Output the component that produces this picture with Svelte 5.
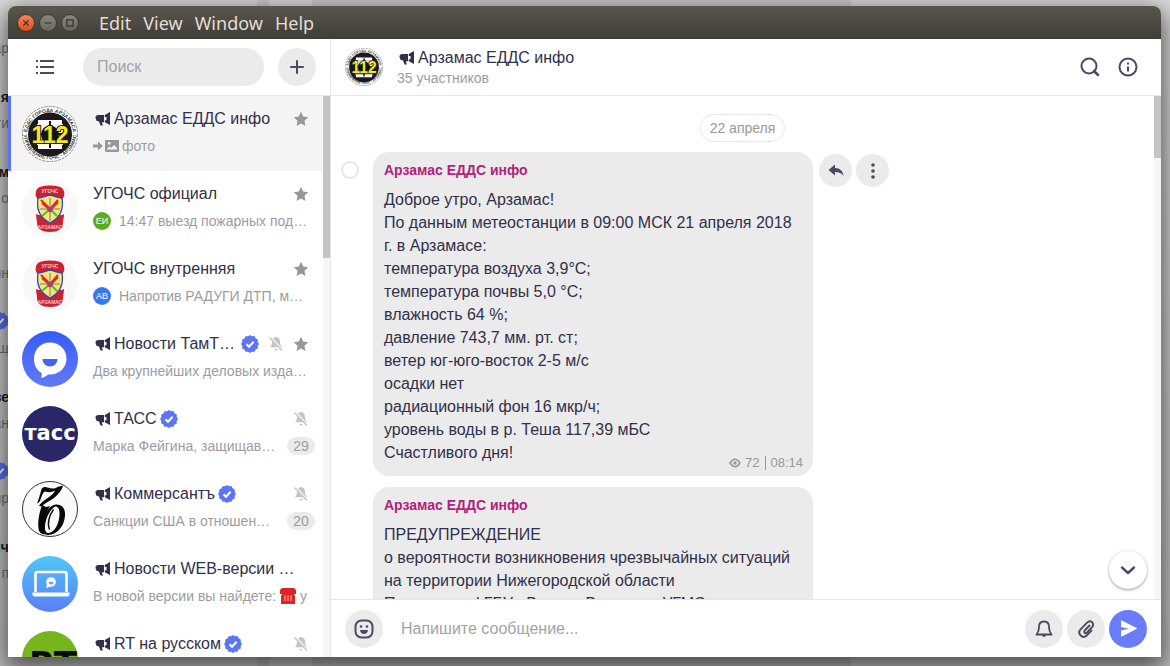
<script lang="ts">
  type Chat = {
    title: string;
    preview: string;
    avatar: string;
    channel?: boolean;
    verified?: boolean;
    muted?: boolean;
    starred?: boolean;
    photo?: boolean;
    author?: { initials: string; tone: string };
    unread?: number;
    phone?: boolean;
    active?: boolean;
  };
  type Message = { id: number; sender: string; lines: string[]; views: number; time: string };

  const menus = ["Edit", "View", "Window", "Help"];

  const chats: Chat[] = [
    { title: "Арзамас ЕДДС инфо", preview: "фото", avatar: "112", channel: true, starred: true, photo: true, active: true },
    { title: "УГОЧС официал", preview: "14:47 выезд пожарных под…", avatar: "crest", starred: true, author: { initials: "ЕИ", tone: "green" } },
    { title: "УГОЧС внутренняя", preview: "Напротив РАДУГИ ДТП, м…", avatar: "crest", starred: true, author: { initials: "АВ", tone: "blue" } },
    { title: "Новости ТамТ…", preview: "Два крупнейших деловых изда…", avatar: "tamtam", channel: true, verified: true, muted: true, starred: true },
    { title: "ТАСС", preview: "Марка Фейгина, защищав…", avatar: "tass", channel: true, verified: true, muted: true, unread: 29 },
    { title: "Коммерсантъ", preview: "Санкции США в отношен…", avatar: "kommersant", channel: true, verified: true, muted: true, unread: 20 },
    { title: "Новости WEB-версии …", preview: "В новой версии вы найдете:", avatar: "web", channel: true, phone: true },
    { title: "RT на русском", preview: "", avatar: "rt", channel: true, verified: true, muted: true },
  ];

  const messages: Message[] = [
    {
      id: 1,
      sender: "Арзамас ЕДДС инфо",
      lines: [
        "Доброе утро, Арзамас!",
        "По данным метеостанции в 09:00 МСК 21 апреля 2018",
        "г. в Арзамасе:",
        "температура воздуха 3,9°С;",
        "температура почвы 5,0 °С;",
        "влажность 64 %;",
        "давление 743,7 мм. рт. ст;",
        "ветер юг-юго-восток 2-5 м/с",
        "осадки нет",
        "радиационный фон 16 мкр/ч;",
        "уровень воды в р. Теша 117,39 мБС",
        "Счастливого дня!",
      ],
      views: 72,
      time: "08:14",
    },
    {
      id: 2,
      sender: "Арзамас ЕДДС инфо",
      lines: [
        "ПРЕДУПРЕЖДЕНИЕ",
        "о вероятности возникновения чрезвычайных ситуаций",
        "на территории Нижегородской области",
        "По данным ФГБУ «Верхне-Волжское УГМС»",
      ],
      views: 70,
      time: "08:15",
    },
  ];

  let search = $state("");
  let draft = $state("");
</script>

{#snippet megaphone()}
  <svg class="megaphone" viewBox="0 0 16 16" aria-hidden="true">
    <path d="M9.800 4 15 1v13l-5.200-2.800v-2h1.700V6H9.800z" />
    <path d="M9 4v7.200H7.200l-.2 1 1 2.300H5.500L4 10.500 1.500 9.800.5 7 .8 5l2-1z" />
  </svg>
{/snippet}

{#snippet star()}
  <svg class="star" viewBox="0 0 16 16" aria-hidden="true">
    <path d="M8 .8l2.200 4.700 5 .7-3.700 3.600.9 5.200L8 12.500 3.600 15l.9-5.200L.8 6.200l5-.7z" />
  </svg>
{/snippet}

{#snippet verified()}
  <svg class="verified" viewBox="0 0 18 18" aria-hidden="true">
    <path d="M9 0l2 1.300 2.500-.2 1.100 2.200 2.200 1.100-.1 2.500L18 9l-1.300 2 .1 2.500-2.200 1.100-1.100 2.200-2.500-.1L9 18l-2-1.300-2.500.1-1.100-2.200-2.200-1.100.1-2.500L0 9l1.300-2-.1-2.500 2.200-1.100 1.100-2.200 2.500.1z" fill="#5c74f6" />
    <path d="M5.500 9.200l2.500 2.500 4.600-5" fill="none" stroke="#fff" stroke-width="2" />
  </svg>
{/snippet}

{#snippet muted()}
  <svg class="muted" viewBox="0 0 16 16" aria-hidden="true">
    <path d="M8 1c2.600.4 4 2.400 4 4.600 0 3.400.8 4.400 2 5.700H2c1.200-1.300 2-2.300 2-5.700C4 3.400 5.400 1.400 8 1zM6.500 13h3c0 2-3 2-3 0z" fill="#c4c4c6" />
    <path d="M2.500 1.500l12 13" stroke="#fff" stroke-width="2.400" />
    <path d="M1.500 1.500l12.500 13" stroke="#c4c4c6" stroke-width="1.400" />
  </svg>
{/snippet}

{#snippet avatar(kind: string)}
  <svg class="avatar" viewBox="0 0 56 56" aria-hidden="true">
    {#if kind === "112"}
      <defs>
        <path id="ring-top" d="M5 29a23 23 0 0 1 46 0" />
        <path id="ring-bottom" d="M1.500 27a26.500 26.500 0 0 0 53 0" />
      </defs>
      <circle cx="28" cy="28" r="27.500" fill="#fff" stroke="#8c8c8c" stroke-width="1" stroke-dasharray="3 1" />
      <text class="ring"><textPath href="#ring-top" startOffset="50%">ЕДДС ГОРОДА АРЗАМАСА</textPath></text>
      <text class="ring"><textPath href="#ring-bottom" startOffset="50%">УПРАВЛЕНИЕ ГОЧС - АРЗАМАС</textPath></text>
      <circle cx="28" cy="28.500" r="22" fill="#1b191d" />
      <path d="M16 14h24v4H16zM16 39h24v4H16z" fill="#fff" />
      <path d="M15 18h26v21H15z" fill="#f4f4f4" />
      <circle cx="28" cy="28.500" r="9" fill="#151318" />
      <path d="M28 15v27M16 28h24" stroke="#111" stroke-width="2" />
      <text class="number" x="28" y="37">112</text>
    {:else if kind === "crest"}
      <circle cx="28" cy="28" r="28" fill="#f8f8f8" />
      <path d="M16 7c4-3.500 20-3.500 24 0 3 3 3 8 1 10l-1 3H16l-1-3c-2-2-2-7 1-10z" fill="#c92333" />
      <path d="M14 33c4 2 4 0 6 2h16c2-2 3 0 6-2 0 4-1 6-1 9 0 6-5 9-13 9s-13-3-13-9c0-3-1-5-1-9z" fill="#c92333" />
      <path d="M16 17c4 0 7-2 12-3 5 1 8 3 12 3 2 12-2 20-12 25-10-5-14-13-12-25z" fill="#f4e774" stroke="#3945ba" stroke-width="1.300" />
      <path d="M19 19l9 9 8-9M20 22l8 7M36 21l-8 8" stroke="#df2630" stroke-width="2" fill="none" />
      <path d="M27 29l-7 6M29 29l6 6" stroke="#5eb53a" stroke-width="2" />
      <path d="M28 17v23M18 28h20" stroke="#707c91" stroke-width="1" />
      <circle cx="28" cy="28.500" r="2.700" fill="#d63240" />
      <circle cx="28" cy="28.500" r="1.300" fill="#4169c5" />
      <text class="crest-label" x="28" y="11.500">УГОЧС</text>
      <text class="crest-label" x="28" y="48">АРЗАМАС</text>
    {:else if kind === "tamtam"}
      <defs><linearGradient id="tamtam-fill" x2="0" y2="1"><stop stop-color="#365cf5" /><stop offset="1" stop-color="#627af8" /></linearGradient></defs>
      <circle cx="28" cy="28" r="28" fill="url(#tamtam-fill)" />
      <path d="M28 11.500c9.500 0 16.500 7 16.500 16S37.500 43.500 28 43.500h-2c-2 1.800-4 2.800-7 3.500.8-1.500.8-3.500.5-5C14.500 39 12 34 12 28c0-9.500 6.500-16.500 16-16.500z" fill="#fff" />
      <path d="M20.500 28h15c0 4.500-3.500 7.500-7.500 7.500S20.500 32.500 20.500 28z" fill="#4365f5" />
    {:else if kind === "tass"}
      <circle cx="28" cy="28" r="28" fill="#292766" />
      <text class="tass" x="28" y="34">тасс</text>
    {:else if kind === "kommersant"}
      <circle cx="28" cy="28" r="27.500" fill="#fafafa" stroke="#333" />
      <path d="M15 22.500c2-5 3-9 4.500-14.500 2-2.500 4-2 6-1.500 4 1.300 7 1.500 10-.5L41 4.500c-1 5-5 9-9 12.500-6 4-10 6-12.500 8.500l-2.500-.5c2-4 8-7 12-10.500 2-1.500 3-3 4-5-4 2.500-7 1.500-10 1-2 .5-3 4-4.500 8-.5 2-1.500 3-3.500 4z" fill="#090909" />
      <path d="M20 24c-3 9-5 18-3 26 2 3 4 3.500 7 3-3-4-3-10-1-16 1-4 3-9 5-12l-4 1z" fill="#090909" />
      <path fill-rule="evenodd" d="M34 23.500c6-.5 9.500 4 9 11-.6 10-7 19-17 19.500-4 0-6-3-6-8 .5-11 6-21.500 14-22.500zm-1 2c-5 3-9.500 12-10 20-.3 4 .8 6.500 3.500 6.500 6-.5 10.500-9 11-18 .3-5-1-9-4.500-8.500z" fill="#090909" />
      <path d="M31.500 28.500c-4.500 6-6.500 14-4 20" fill="none" stroke="#090909" stroke-width="1.400" />
    {:else if kind === "web"}
      <defs><linearGradient id="web-fill" x2="0" y2="1"><stop stop-color="#50c7f7" /><stop offset="1" stop-color="#5b7df7" /></linearGradient></defs>
      <circle cx="28" cy="28" r="28" fill="url(#web-fill)" />
      <path d="M13.500 36V18q0-2 2-2h27q2 0 2 2v18" fill="none" stroke="#fff" stroke-width="2.600" />
      <path d="M10.500 36.500h37v2q0 2-2 2h-33q-2 0-2-2z" fill="#fff" />
      <circle cx="29" cy="26" r="4.800" fill="#fff" />
      <path d="M25 28l-1 4 5-2z" fill="#fff" />
      <path d="M26.500 26h5q-.5 2.500-2.500 2.500T26.500 26z" fill="#56a2f7" />
    {:else}
      <circle cx="28" cy="28" r="28" fill="#76b51b" />
      <text class="rt" x="31" y="45">RT</text>
    {/if}
  </svg>
{/snippet}

<div class="desktop">
  <div class="backdrop" aria-hidden="true">
    <span class="peek p1">ар</span><span class="peek dark p2">я</span><span class="peek p3">ги</span>
    <span class="peek dark p4">м</span><span class="peek p5">о</span><span class="peek p6">ин</span>
    <span class="peek p7">{@render verified()}</span><span class="peek p8">ещ</span>
    <span class="peek dark p9">зе</span><span class="peek p10">ан</span>
    <span class="peek p11">{@render verified()}</span><span class="peek p12">пр</span>
    <span class="peek dark p13">ич</span><span class="peek p14">п</span>
  </div>

  <div class="window">
    <div class="titlebar">
      <button class="control close" aria-label="Close"><svg viewBox="0 0 18 18"><path d="M6 6l6 6M12 6l-6 6" /></svg></button>
      <button class="control" aria-label="Minimize"><svg viewBox="0 0 18 18"><path d="M5 9h8" /></svg></button>
      <button class="control" aria-label="Maximize"><svg viewBox="0 0 18 18"><path d="M5.500 5.500h7v7h-7z" /></svg></button>
      <nav class="menus">
        {#each menus as menu}<button>{menu}</button>{/each}
      </nav>
    </div>

    <div class="app">
      <aside class="sidebar">
        <header class="tools">
          <button class="plain" aria-label="Меню">
            <svg width="22" height="20" viewBox="0 0 22 20"><path d="M6 4h14M6 10h14M6 16h14M2 4h2M2 10h2M2 16h2" stroke-width="2" stroke-linecap="butt" /></svg>
          </button>
          <input class="search" type="search" aria-label="Поиск" placeholder="Поиск" bind:value={search} />
          <button class="round" aria-label="Создать"><svg width="20" height="20" viewBox="0 0 20 20"><path d="M10 4v12M4 10h12" stroke-width="2" /></svg></button>
        </header>
        <div class="scroller">
          <ul class="chats">
            {#each chats as chat}
              <li class="chat" class:active={chat.active}>
                {@render avatar(chat.avatar)}
                <div class="info">
                  <div class="row">
                    <span class="name">
                      {#if chat.channel}{@render megaphone()}{/if}
                      <span>{chat.title}</span>
                      {#if chat.verified && !chat.starred}{@render verified()}{/if}
                    </span>
                    <span class="marks">
                      {#if chat.verified && chat.starred}{@render verified()}{/if}
                      {#if chat.muted}{@render muted()}{/if}
                      {#if chat.starred}{@render star()}{/if}
                    </span>
                  </div>
                  <div class="row preview">
                    {#if chat.photo}
                      <svg class="photo" viewBox="0 0 26 14" aria-hidden="true">
                        <path d="M0 5.500h5V2.500l5 4.500-5 4.500v-3H0z" />
                        <path fill-rule="evenodd" d="M13 1h12q1 0 1 1v10q0 1-1 1H13q-1 0-1-1V2q0-1 1-1zm1 9.500h10V9l-3-3-3 3-1.500-1.500L14 9.500zM15 3v2.500h2.500V3z" />
                      </svg>
                    {/if}
                    {#if chat.author}<span class="author {chat.author.tone}">{chat.author.initials}</span>{/if}
                    <span class="text">{chat.preview}</span>
                    {#if chat.phone}
                      <svg class="phone" viewBox="0 0 16 16" aria-hidden="true">
                        <path d="M2 0h12l2 2v4h-4V4H4v2H0V2z" fill="#db2525" />
                        <path d="M3 4h10l2 4v8H1V8z" fill="#db2525" />
                        <path d="M5 7v6M8 7v6M11 7v6" stroke="#f7b5b5" stroke-width="1" />
                      </svg>
                      <span>у</span>
                    {/if}
                    {#if chat.unread}<span class="unread">{chat.unread}</span>{/if}
                  </div>
                </div>
              </li>
            {/each}
          </ul>
          <div class="track"><div class="thumb tall"></div></div>
        </div>
      </aside>

      <main class="conversation">
        <header class="heading">
          <div class="small-avatar">{@render avatar("112")}</div>
          <div class="about">
            <h1>{@render megaphone()}<span>Арзамас ЕДДС инфо</span></h1>
            <p>35 участников</p>
          </div>
          <button class="plain" aria-label="Найти"><svg width="22" height="22" viewBox="0 0 22 22"><circle cx="10" cy="10" r="7.500" /><path d="M15 15l4 4" stroke-width="2.500" /></svg></button>
          <button class="plain" aria-label="Информация"><svg width="22" height="22" viewBox="0 0 22 22"><circle cx="11" cy="11" r="8.500" /><path d="M11 10.500v5M11 6.500v2" stroke-linecap="butt" stroke-width="2" /></svg></button>
        </header>

        <div class="scroller">
          <div class="feed">
            <time class="date">22 апреля</time>
            {#each messages as message (message.id)}
              <div class="message">
                <div class="pick">{#if message.id === 1}<input type="checkbox" aria-label="Выбрать сообщение" />{/if}</div>
                <article class="bubble">
                  <h2>{message.sender}</h2>
                  <p>{#each message.lines as line}<span>{line}</span>{/each}</p>
                  <footer>
                    <svg width="12" height="10" viewBox="0 0 12 10"><path d="M1 5q5-7.500 10 0Q6 12.500 1 5z" /><circle cx="6" cy="5" r="1" /></svg>
                    <span>{message.views}</span><time>{message.time}</time>
                  </footer>
                </article>
                {#if message.id === 1}
                  <div class="actions">
                    <button class="round little" aria-label="Ответить"><svg width="18" height="18" viewBox="0 0 18 18"><path class="solid" d="M8 2.500v3.500c5 0 8 3 8.500 8-2-3-4.500-4-8.500-4v3.500L1.500 8z" /></svg></button>
                    <button class="round little" aria-label="Ещё"><svg width="18" height="18" viewBox="0 0 18 18"><g class="solid"><circle cx="9" cy="3" r="1.800" /><circle cx="9" cy="9" r="1.800" /><circle cx="9" cy="15" r="1.800" /></g></svg></button>
                  </div>
                {/if}
              </div>
            {/each}
          </div>
          <div class="track"><div class="thumb"></div></div>
          <button class="down" aria-label="Вниз"><svg width="20" height="20" viewBox="0 0 20 20"><path d="M4 7.500l6 5.500 6-5.500" stroke-width="2.400" /></svg></button>
        </div>

        <form class="composer" onsubmit={(e) => e.preventDefault()}>
          <button type="button" class="round" aria-label="Смайлы">
            <svg width="22" height="22" viewBox="0 0 22 22"><rect x="2.500" y="2.500" width="17" height="17" rx="6" /><g class="solid"><circle cx="8" cy="8.500" r="1.300" /><circle cx="14" cy="8.500" r="1.300" /><path d="M7 12h8q-.5 4-4 4t-4-4z" /></g></svg>
          </button>
          <input class="draft" type="text" aria-label="Сообщение" placeholder="Напишите сообщение..." bind:value={draft} />
          <button type="button" class="round" aria-label="Уведомления">
            <svg width="22" height="22" viewBox="0 0 22 22"><path d="M11 3.500c-3 0-5 2.200-5 5.500 0 4-.8 5.500-2.500 7.500h15c-1.700-2-2.500-3.500-2.500-7.500 0-3.300-2-5.500-5-5.500z" stroke-width="1.800" /><path class="solid" d="M9 17h4q-.5 2-2 2t-2-2z" /></svg>
          </button>
          <button type="button" class="round" aria-label="Прикрепить">
            <svg width="22" height="22" viewBox="0 0 22 22"><path d="M14.500 7.500l-4.800 5c-1.600 1.700.5 3.700 2.100 2.100l5.300-5.500c3.200-3.500-1.600-7.800-5-4.400L5.800 11.200c-4.200 4.500 1.800 10.300 6.200 6l4.500-4.600" stroke-width="1.900" /></svg>
          </button>
          <button class="round send" aria-label="Отправить"><svg width="22" height="22" viewBox="0 0 22 22"><path d="M4 3.200q0-1 1-.6l14.500 7.300q1 .6 0 1.200L5 18.500q-1 .4-1-.6v-5.500l8-1.700-8-1.700z" /></svg></button>
        </form>
      </main>
    </div>
  </div>
</div>

<style>
  :global(body) { background: #c9c9c9; }
  * { box-sizing: border-box; }
  button, input { font: inherit; }
  button { border: 0; padding: 0; background: none; color: inherit; }
  h1, h2, p, ul { margin: 0; padding: 0; }
  svg { display: block; flex: none; }

  .desktop { position: relative; height: 100vh; padding: 6px 9px 9px 8px; overflow: hidden; background: linear-gradient(#dcdcdc, #c4c4c4); color: #31304a; font: 16px/20px "Liberation Sans", Arial, sans-serif; }
  .backdrop { position: absolute; inset: 0; background: linear-gradient(90deg, transparent 257px, rgba(0,0,0,.07) 257px 269px, transparent 269px 312px, rgba(0,0,0,.07) 312px 851px, transparent 851px); }
  .peek { position: absolute; right: calc(100% - 9px); color: #777; font-size: 14px; }
  .dark { color: #222; font-weight: 700; }
  .p1 { top: 38px; } .p2 { top: 87px; } .p3 { top: 113px; } .p4 { top: 162px; } .p5 { top: 188px; }
  .p6 { top: 263px; } .p7 { top: 312px; } .p8 { top: 338px; } .p9 { top: 387px; } .p10 { top: 413px; }
  .p11 { top: 462px; } .p12 { top: 488px; } .p13 { top: 537px; } .p14 { top: 563px; }

  .window { position: relative; display: flex; flex-direction: column; height: 100%; border-radius: 8px 8px 0 0; box-shadow: 0 8px 24px 4px rgba(0,0,0,.6); overflow: hidden; }
  .titlebar { display: flex; align-items: center; flex: none; gap: 4px; height: 33px; padding: 0 9px; background: linear-gradient(#5a564d, #3e3d38); }
  .control { width: 18px; height: 18px; border: 1px solid #3b3a35; border-radius: 50%; background: linear-gradient(#8a867b, #69665e); }
  .control svg { width: 16px; height: 16px; fill: none; stroke: #33322e; stroke-width: 1.400; }
  .close { background: linear-gradient(#f5835b, #e24f1c); }
  .menus { display: flex; gap: 12px; margin-left: 16px; color: #e2ded5; font: 18px/24px "Noto Sans", "Open Sans", sans-serif; }

  .app { display: flex; flex: 1; min-height: 0; background: #fff; }
  .sidebar { display: flex; flex-direction: column; flex: none; width: 323px; border-right: 1px solid #e6e6e6; }
  .tools { display: flex; align-items: center; flex: none; gap: 14px; height: 57px; padding: 0 14px 0 26px; border-bottom: 1px solid #e6e6e6; }
  .plain svg, .round svg, .down svg { margin: auto; fill: none; stroke: #4c4a60; stroke-width: 2; stroke-linecap: round; stroke-linejoin: round; }
  .round .solid { fill: #4c4a60; stroke: none; }
  .round { flex: none; width: 38px; height: 38px; border-radius: 50%; background: #ebebeb; }
  .search { flex: 1; min-width: 0; height: 38px; margin-left: 13px; padding: 0 14px; border: 0; border-radius: 19px; background: #ebebeb; }
  input::placeholder { color: #a3a3a6; opacity: 1; }

  .scroller { position: relative; display: flex; flex: 1; min-height: 0; overflow: hidden; }
  .track { flex: none; width: 7px; background: #f6f6f6; }
  .thumb { height: 62px; background: #c4c4c6; }
  .tall { height: 162px; }
  .chats { flex: 1; min-width: 0; list-style: none; }
  .chat { display: flex; align-items: center; gap: 15px; height: 75px; padding: 0 8px 0 11px; border-left: 3px solid transparent; }
  .active { border-color: #5c74f6; background: #f4f4f4; }
  .avatar { width: 56px; height: 56px; }
  .info { display: flex; flex-direction: column; flex: 1; min-width: 0; gap: 7px; padding-bottom: 3px; }
  .row { display: flex; align-items: center; height: 20px; white-space: nowrap; }
  .name, .marks { display: flex; align-items: center; }
  .name { gap: 3px; }
  .marks { gap: 9px; margin-left: auto; padding-right: 6px; }
  .megaphone { width: 16px; height: 16px; margin-left: 2px; fill: #31304a; }
  .star { width: 16px; height: 16px; fill: #98989b; }
  .verified { width: 18px; height: 18px; }
  .muted { width: 16px; height: 16px; }
  .preview { color: #9c9c9f; font-size: 14px; }
  .photo { width: 26px; height: 14px; margin-right: 3px; fill: #98989b; }
  .phone { width: 16px; height: 16px; margin: 0 4px; }
  .author { width: 18px; height: 18px; margin-right: 8px; border-radius: 50%; color: #fff; font-size: 9px; line-height: 18px; text-align: center; }
  .green { background: #5bab1c; }
  .blue { background: #3978ec; }
  .unread { min-width: 28px; height: 18px; margin-left: auto; border-radius: 9px; background: #ebebeb; line-height: 18px; text-align: center; }

  .conversation { display: flex; flex-direction: column; flex: 1; min-width: 0; }
  .heading { display: flex; align-items: center; flex: none; gap: 16px; height: 57px; padding: 0 22px 0 14px; border-bottom: 1px solid #e6e6e6; }
  .small-avatar .avatar { width: 38px; height: 38px; }
  .about { flex: 1; margin-left: -2px; padding-top: 2px; }
  .about h1 { display: flex; align-items: center; gap: 3px; font-size: 16px; font-weight: 400; }
  .about p { color: #9c9c9f; font-size: 14px; }
  .feed { display: flex; flex-direction: column; flex: 1; min-width: 0; padding-top: 18px; }
  .date { align-self: center; margin-bottom: 10px; padding: 0 9px; border: 1px solid #e6e6e6; border-radius: 14px; color: #98989b; font-size: 14px; line-height: 26px; }
  .message { display: flex; flex: none; margin-bottom: 11px; padding-left: 10px; }
  .pick { width: 32px; padding-top: 9px; }
  .pick input { display: block; appearance: none; width: 18px; height: 18px; margin: 0; border: 2px solid #e6e6e6; border-radius: 50%; }
  .bubble { position: relative; width: 440px; padding: 8px 11px 12px; border-radius: 16px; background: #ebebeb; }
  .bubble h2 { margin-bottom: 8px; color: #b3207d; font-size: 14px; line-height: 20px; }
  .bubble p span { display: block; line-height: 23px; white-space: nowrap; }
  .bubble footer { position: absolute; right: 10px; bottom: 3px; display: flex; align-items: center; gap: 4px; color: #98989b; font-size: 13px; }
  .bubble footer svg { fill: none; stroke: #98989b; stroke-width: 1.500; }
  .bubble footer time { margin-left: 2px; padding-left: 4px; border-left: 1px solid #98989b; line-height: 14px; }
  .actions { display: flex; gap: 4px; padding: 2px 6px; }
  .little { width: 33px; height: 33px; }
  .down { position: absolute; right: 14px; bottom: 10px; width: 38px; height: 38px; border-radius: 50%; background: #fff; box-shadow: 0 1px 3px rgba(0,0,0,.4); }
  .composer { display: flex; align-items: center; flex: none; gap: 4px; height: 58px; padding: 0 14px; border-top: 1px solid #e6e6e6; }
  .draft { flex: 1; min-width: 0; padding: 0 14px; border: 0; background: none; }
  .send { background: #687dfb; }
  .send svg { fill: #fff; stroke: none; }

  .avatar text { text-anchor: middle; font-family: "Liberation Sans", Arial, sans-serif; font-weight: 700; }
  .avatar .ring { fill: #3a3a3a; font-size: 5px; }
  .avatar .number { fill: #f8e71c; stroke: #1b191d; stroke-width: 2; paint-order: stroke; font-size: 23px; }
  .avatar .crest-label { fill: #f6c8cc; font-size: 5px; }
  .avatar .tass { fill: #fff; font: 700 21px "DejaVu Sans", sans-serif; }
  .avatar .rt { fill: #0a0a0a; font: 700 34px "DejaVu Sans", sans-serif; }
</style>
